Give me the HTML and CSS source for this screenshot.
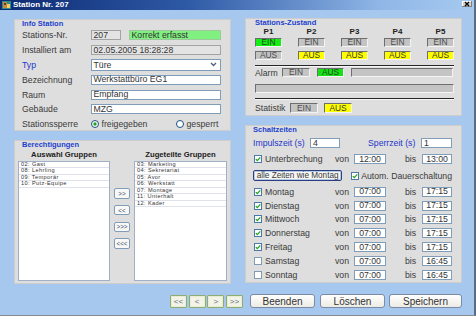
FILE: index.html
```html
<!DOCTYPE html>
<html lang="de">
<head>
<meta charset="utf-8">
<title>Station Nr. 207</title>
<link rel="stylesheet" href="styles.css">
</head>
<body>
<div class="window">
  <div class="titlebar">
    <svg class="appicon" width="9" height="8" viewBox="0 0 9 8"><rect x="0" y="0" width="9" height="8" fill="#2c8c8c"/><rect x="1" y="1" width="4" height="6" fill="#c88a3a"/><rect x="5" y="3" width="3" height="4" fill="#e8d070"/><rect x="2" y="2" width="2" height="2" fill="#6a3a1a"/></svg>
    <span class="title">Station Nr. 207</span>
    <span class="close"><svg width="10" height="6" viewBox="0 0 10 6"><path d="M3 1l4 4M7 1l-4 4" stroke="#000" stroke-width="1.2"/></svg></span>
  </div>
  <div class="client">
    <div class="cols">
      <div class="col col-left">
        <section class="panel info">
          <h2 class="ph">Info Station</h2>
          <div class="frow"><span class="lbl">Stations-Nr.</span><span class="inp ro nr">207</span><span class="inp okbox">Korrekt erfasst</span></div>
          <div class="frow"><span class="lbl">Installiert am</span><span class="inp ro wide">02.05.2005 18:28:28</span></div>
          <div class="frow"><span class="lbl blue">Typ</span><span class="inp sel wide">Türe<svg class="chev" width="7" height="5" viewBox="0 0 7 5"><path d="M1 1l2.5 2.5L6 1" stroke="#4d6185" fill="none" stroke-width="1.3"/></svg></span></div>
          <div class="frow"><span class="lbl">Bezeichnung</span><span class="inp wide">Werkstattbüro EG1</span></div>
          <div class="frow"><span class="lbl">Raum</span><span class="inp wide">Empfang</span></div>
          <div class="frow"><span class="lbl">Gebäude</span><span class="inp wide">MZG</span></div>
          <div class="frow"><span class="lbl">Stationssperre</span>
            <span class="radio r1"><svg width="8" height="8" viewBox="0 0 8 8"><circle cx="4" cy="4" r="3.5" fill="#fff" stroke="#1c5180"/><circle cx="4" cy="4" r="1.7" fill="#21a121"/></svg>freigegeben</span>
            <span class="radio"><svg width="8" height="8" viewBox="0 0 8 8"><circle cx="4" cy="4" r="3.5" fill="#fff" stroke="#1c5180"/></svg>gesperrt</span>
          </div>
        </section>
        <section class="panel perms">
          <h2 class="ph">Berechtigungen</h2>
          <div class="lists">
            <div class="lcol">
              <div class="lhead">Auswahl Gruppen</div>
              <ul class="list">
                <li>02: Gast</li><li>08: Lehrling</li><li>09: Temporär</li><li>10: Putz-Equipe</li>
              </ul>
            </div>
            <div class="mid">
              <span class="mbtn">&gt;&gt;</span>
              <span class="mbtn">&lt;&lt;</span>
              <span class="mbtn">&gt;&gt;&gt;</span>
              <span class="mbtn">&lt;&lt;&lt;</span>
            </div>
            <div class="lcol">
              <div class="lhead">Zugeteilte Gruppen</div>
              <ul class="list">
                <li>03: Marketing</li><li>04: Sekretariat</li><li>05: Avor</li><li>06: Werkstatt</li><li>07: Montage</li><li>11: Unterhalt</li><li>12: Kader</li>
              </ul>
            </div>
          </div>
        </section>
      </div>
      <div class="col">
        <section class="panel status">
          <h2 class="ph">Stations-Zustand</h2>
          <div class="pgrid">
            <span class="pl">P1</span><span class="pl">P2</span><span class="pl">P3</span><span class="pl">P4</span><span class="pl">P5</span>
          </div>
          <div class="pgrid brow">
            <span class="sb green">EIN</span><span class="sb">EIN</span><span class="sb">EIN</span><span class="sb">EIN</span><span class="sb">EIN</span>
          </div>
          <div class="pgrid brow2">
            <span class="sb">AUS</span><span class="sb yellow">AUS</span><span class="sb yellow">AUS</span><span class="sb yellow">AUS</span><span class="sb yellow">AUS</span>
          </div>
          <div class="sep"></div>
          <div class="arow"><span class="albl">Alarm</span><span class="sb w28">EIN</span><span class="sb green2 w27 ml7">AUS</span><span class="sb long ml7"></span></div>
          <div class="sb full"></div>
          <div class="sep sep2"></div>
          <div class="srow"><span class="slbl">Statistik</span><span class="sb w28">EIN</span><span class="sb yellow w28 ml6">AUS</span></div>
        </section>
        <section class="panel times">
          <h2 class="ph">Schaltzeiten</h2>
          <div class="irow">
            <span class="blue ilbl1">Impulszeit (s)</span><span class="inp tin w30">4</span>
            <span class="blue ilbl2">Sperrzeit (s)</span><span class="inp tin w31">1</span>
          </div>
          <div class="drow urow">
            <span class="dl"><svg class="cb" width="8" height="8" viewBox="0 0 8 8"><rect x=".5" y=".5" width="7" height="7" fill="#fff" stroke="#4a78a8"/><path d="M1.8 4.1l1.5 1.5L6.3 2.4" fill="none" stroke="#21a121" stroke-width="1.3"/></svg>Unterbrechung</span>
            <span>von</span><span class="inp t">12:00</span><span></span><span>bis</span><span class="inp t">13:00</span>
          </div>
          <div class="brow3">
            <span class="allbtn">alle Zeiten wie Montag</span>
            <span class="dl auto"><svg class="cb" width="8" height="8" viewBox="0 0 8 8"><rect x=".5" y=".5" width="7" height="7" fill="#fff" stroke="#4a78a8"/><path d="M1.8 4.1l1.5 1.5L6.3 2.4" fill="none" stroke="#21a121" stroke-width="1.3"/></svg>Autom. Dauerschaltung</span>
          </div>
          <div class="days">
            <div class="drow"><span class="dl"><svg class="cb" width="8" height="8" viewBox="0 0 8 8"><rect x=".5" y=".5" width="7" height="7" fill="#fff" stroke="#4a78a8"/><path d="M1.8 4.1l1.5 1.5L6.3 2.4" fill="none" stroke="#21a121" stroke-width="1.3"/></svg>Montag</span><span>von</span><span class="inp t">07:00</span><span></span><span>bis</span><span class="inp t">17:15</span></div>
            <div class="drow"><span class="dl"><svg class="cb" width="8" height="8" viewBox="0 0 8 8"><rect x=".5" y=".5" width="7" height="7" fill="#fff" stroke="#4a78a8"/><path d="M1.8 4.1l1.5 1.5L6.3 2.4" fill="none" stroke="#21a121" stroke-width="1.3"/></svg>Dienstag</span><span>von</span><span class="inp t">07:00</span><span></span><span>bis</span><span class="inp t">17:15</span></div>
            <div class="drow"><span class="dl"><svg class="cb" width="8" height="8" viewBox="0 0 8 8"><rect x=".5" y=".5" width="7" height="7" fill="#fff" stroke="#4a78a8"/><path d="M1.8 4.1l1.5 1.5L6.3 2.4" fill="none" stroke="#21a121" stroke-width="1.3"/></svg>Mittwoch</span><span>von</span><span class="inp t">07:00</span><span></span><span>bis</span><span class="inp t">17:15</span></div>
            <div class="drow"><span class="dl"><svg class="cb" width="8" height="8" viewBox="0 0 8 8"><rect x=".5" y=".5" width="7" height="7" fill="#fff" stroke="#4a78a8"/><path d="M1.8 4.1l1.5 1.5L6.3 2.4" fill="none" stroke="#21a121" stroke-width="1.3"/></svg>Donnerstag</span><span>von</span><span class="inp t">07:00</span><span></span><span>bis</span><span class="inp t">17:15</span></div>
            <div class="drow"><span class="dl"><svg class="cb" width="8" height="8" viewBox="0 0 8 8"><rect x=".5" y=".5" width="7" height="7" fill="#fff" stroke="#4a78a8"/><path d="M1.8 4.1l1.5 1.5L6.3 2.4" fill="none" stroke="#21a121" stroke-width="1.3"/></svg>Freitag</span><span>von</span><span class="inp t">07:00</span><span></span><span>bis</span><span class="inp t">17:15</span></div>
            <div class="drow"><span class="dl"><svg class="cb" width="8" height="8" viewBox="0 0 8 8"><rect x=".5" y=".5" width="7" height="7" fill="#fff" stroke="#7f9db9"/></svg>Samstag</span><span>von</span><span class="inp t">07:00</span><span></span><span>bis</span><span class="inp t">16:45</span></div>
            <div class="drow"><span class="dl"><svg class="cb" width="8" height="8" viewBox="0 0 8 8"><rect x=".5" y=".5" width="7" height="7" fill="#fff" stroke="#7f9db9"/></svg>Sonntag</span><span>von</span><span class="inp t">07:00</span><span></span><span>bis</span><span class="inp t">16:45</span></div>
          </div>
        </section>
      </div>
    </div>
    <div class="footer">
      <div class="nav">
        <span class="nbtn">&lt;&lt;</span><span class="nbtn">&lt;</span><span class="nbtn">&gt;</span><span class="nbtn">&gt;&gt;</span>
      </div>
      <span class="abtn b1">Beenden</span>
      <span class="abtn b2">Löschen</span>
      <span class="abtn b3">Speichern</span>
    </div>
  </div>
</div>
</body>
</html>
```

FILE: styles.css
```css
* { box-sizing: border-box; margin: 0; padding: 0; }
html, body { width: 476px; height: 317px; overflow: hidden; background: #ffffff; }
body { font-family: "Liberation Sans", Arial, sans-serif; font-size: 8.7px; color: #3a3a3a; }

.window {
  width: 476px; height: 316px;
  display: flex; flex-direction: column;
  background: #a7c8ee;
  border-right: 2px solid #5d6b80;
  border-bottom: 1px solid #8a8a8a;
}
.titlebar {
  height: 10px; flex: none;
  display: flex; align-items: center;
  background: linear-gradient(to right, #0c2a72 0%, #2f5aa6 40%, #8fb6e6 80%, #a6caf0 100%);
}
.appicon { margin-left: 2px; flex: none; }
.title { margin-left: 2px; color: #fff; font-weight: bold; font-size: 8px; line-height: 10px; }
.close {
  margin-left: auto; margin-right: 2px;
  width: 10px; height: 6px; display: flex;
  background: #d4d0c8; box-shadow: inset -1px -1px #808080, inset 1px 1px #fff;
  margin-top: -2px;
}

.client { flex: 1; padding: 8px 12px 0 14px; display: flex; flex-direction: column; }
.cols { display: flex; gap: 14px; height: 266px; }
.col { width: 217px; display: flex; flex-direction: column; gap: 9px; }
.col-left { padding-top: 1px; }

.panel { background: #dedede; border: 1px solid #cdcdcd; }
.ph { font-size: 7.5px; font-weight: bold; color: #1b3fd0; line-height: 8px; height: 8px; }
.blue { color: #2535cc; }

/* Info Station */
.info { height: 112px; padding: 0 9px 0 7px; }
.frow { height: 14.8px; display: flex; align-items: center; }
.lbl { width: 69px; flex: none; }
.inp {
  height: 10px; display: flex; align-items: center;
  background: #fff; border: 1px solid #7f9db9;
  padding-left: 1.5px; line-height: 1; color: #333; white-space: nowrap;
}
.inp.ro { background: #e3e3e3; border-color: #a3a3a3; }
.nr { width: 30px; }
.okbox { width: 92px; margin-left: 8px; background: #80f080; border-color: #9cc89c; }
.wide { width: 130px; }
.sel { height: 12px; justify-content: space-between; padding-right: 3px; }
.chev { flex: none; }
.radio { display: flex; align-items: center; gap: 2.5px; }
.radio svg { flex: none; margin-top: 0.5px; }
.r1 { width: 85px; }

/* Berechtigungen */
.perms { height: 144px; padding: 0 3px 2px 3px; }
.perms .ph { padding-left: 4px; }
.lists { display: grid; grid-template-columns: 92px 24px 93px; }
.lcol { display: flex; flex-direction: column; }
.lhead { height: 12px; line-height: 12px; text-align: center; font-weight: bold; font-size: 7.7px; color: #222; }
.list {
  list-style: none; height: 120px; background: #fff; border: 1px solid #a0b0c8;
  font-size: 5.6px; letter-spacing: 0.4px; color: #333;
}
.list li { height: 6.45px; line-height: 5.45px; padding-left: 2px; border-bottom: 1px solid #dfe2ea; white-space: nowrap; }
.mid { padding-top: 39px; display: flex; flex-direction: column; align-items: center; gap: 6.3px; }
.mbtn {
  width: 16px; height: 10.5px; display: flex; align-items: center; justify-content: center;
  background: #f8f8f6; border: 1px solid #7f9db9; border-radius: 2px;
  font-size: 6.3px; color: #3a4a6a;
}

/* Stations-Zustand */
.status { height: 98px; padding: 0 7px 0 9px; }
.pgrid { display: grid; grid-template-columns: repeat(5, 27px); column-gap: 16px; }
.pl { height: 9px; line-height: 9px; text-align: center; font-weight: bold; font-size: 8px; color: #222; }
.brow { margin-top: 2px; }
.brow2 { margin-top: 4px; }
.sb {
  height: 9px; display: flex; align-items: center; justify-content: center;
  background: #c4c4c4; border: 1px solid; border-color: #6e6e6e #f4f4f4 #f4f4f4 #6e6e6e;
  font-size: 8.4px; line-height: 1; color: #4a4a4a;
}
.sb.green { background: #14ee14; color: #1e4a1e; }
.sb.green2 { background: #18e018; color: #1e4a1e; }
.sb.yellow { background: #ffff00; color: #3a3a20; }
.sep { margin-top: 5px; height: 2px; border-top: 1px solid #262626; border-bottom: 1px solid #f6f6f6; }
.sep2 { margin-top: 5px; }
.arow { margin-top: 1px; display: flex; align-items: center; height: 9px; }
.albl { width: 27px; flex: none; }
.w28 { width: 28px; }
.w27 { width: 27px; }
.ml7 { margin-left: 7px; }
.ml6 { margin-left: 6px; }
.long { width: 102px; }
.full { margin-top: 7px; width: 199px; }
.srow { margin-top: 3px; display: flex; align-items: center; height: 10px; }
.slbl { width: 35px; flex: none; }
.srow .sb { height: 10px; }

/* Schaltzeiten */
.times { height: 158px; padding: 0 9px 0 7px; }
.irow { margin-top: 4px; height: 10px; display: flex; align-items: center; }
.ilbl1 { width: 57px; flex: none; }
.ilbl2 { width: 53px; flex: none; margin-left: 28px; }
.tin { height: 10px; padding-left: 2px; }
.w30 { width: 30px; }
.w31 { width: 31px; }
.drow {
  height: 10px; display: grid; align-items: center;
  grid-template-columns: 82px 19px 32px 19px 17px 30px;
}
.urow { margin-top: 6px; }
.dl { display: flex; align-items: center; white-space: nowrap; }
.cb { flex: none; margin-left: 1px; margin-right: 3px; }
.inp.t { justify-content: center; padding-left: 0; }
.brow3 { margin-top: 6px; height: 11px; display: flex; align-items: center; }
.allbtn {
  width: 94px; height: 11px; display: flex; align-items: center; justify-content: center;
  background: #f6f6f2; border: 1px solid #2a3f80; border-radius: 2px;
  box-shadow: inset 0 0 0 1px #b8c8e8;
  font-size: 8.2px; white-space: nowrap;
}
.auto { margin-left: 8px; }
.auto .cb { margin-right: 2px; }
.days { margin-top: 5.7px; display: flex; flex-direction: column; gap: 3.9px; }

/* Footer */
.footer { margin-top: 10px; height: 15px; display: flex; justify-content: flex-end; align-items: flex-start; }
.nav { display: flex; gap: 1.7px; margin-top: 1px; margin-right: 7px; }
.nbtn {
  width: 17px; height: 13px; display: flex; align-items: center; justify-content: center;
  background: #f3f3e6; border: 1px solid #8eae70; border-radius: 1px;
  box-shadow: inset 0 0 0 1px #e6ecd6;
  font-size: 8px; color: #5a6a88;
}
.abtn {
  height: 14px; display: flex; align-items: center; justify-content: center;
  background: linear-gradient(#ffffff, #ecebe4); border: 1px solid #7d8aa6; border-radius: 3px;
  font-size: 10px; color: #333;
}
.b1 { width: 65px; }
.b2 { width: 65px; margin-left: 5px; }
.b3 { width: 73px; margin-left: 4px; }
```
